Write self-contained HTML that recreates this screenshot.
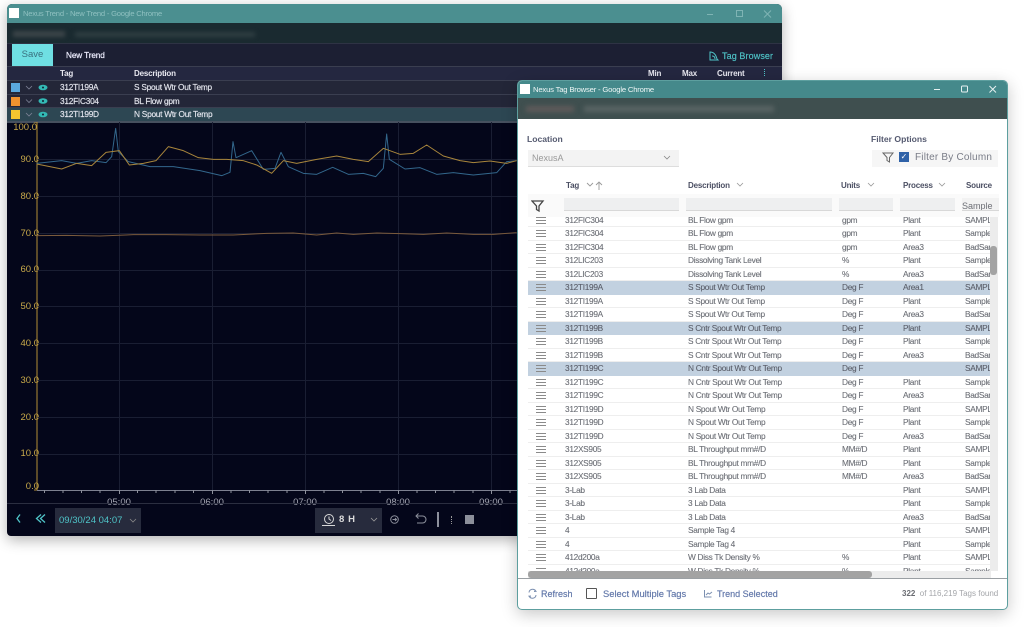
<!DOCTYPE html>
<html><head><meta charset="utf-8"><style>
*{box-sizing:border-box}
html,body{margin:0;padding:0;background:#fff}
body{width:1024px;height:627px;overflow:hidden;position:relative;font-family:"Liberation Sans",sans-serif}
#all{position:absolute;left:0;top:0;width:1024px;height:627px;filter:blur(.3px)}
.a{position:absolute;white-space:nowrap}
#w1{position:absolute;left:7px;top:4px;width:775px;height:532px;background:#04061a;border-radius:5px 5px 4px 4px;box-shadow:0 4px 14px rgba(0,0,0,.3);overflow:hidden}
#w2{position:absolute;left:517px;top:80px;width:491px;height:530px;background:#fff;border:1.5px solid #5d9f9f;border-radius:5px;box-shadow:0 4px 16px rgba(0,0,0,.22);overflow:hidden}
.t1{font-size:8.3px;letter-spacing:-.25px;color:#e4e6ee;font-weight:400;line-height:13px;-webkit-text-stroke:.15px #e4e6ee}
.h1{font-size:8px;letter-spacing:-.2px;color:#e8e8f0;font-weight:700;line-height:13px}
.yl{position:absolute;right:743px;font-size:9.5px;color:#c8a94a;line-height:10px;text-align:right;width:30px}
.xl{position:absolute;top:494px;font-size:9.5px;color:#a4a6b2;line-height:10px;width:40px;text-align:center}
#rows{position:absolute;left:10px;top:136px;width:463px;height:354px;overflow:hidden}
.r{position:absolute;left:0;width:463px;height:13.5px;border-bottom:1px solid #eeeeee;font-size:8.3px;letter-spacing:-.3px;color:#6b6e75;line-height:12.5px;-webkit-text-stroke:.1px #6b6e75}
.r.s{background:#c2d1e0;color:#565a66;border-bottom:0}
.r span{position:absolute;top:0;white-space:nowrap}
.r i{position:absolute;left:8px;top:3px;width:10px;height:7px;border-top:1px solid #8a8a8a;border-bottom:1px solid #8a8a8a}
.r i:after{content:"";position:absolute;left:0;right:0;top:2px;height:1px;background:#8a8a8a}
.c1{left:37px}.c2{left:160px}.c3{left:314px}.c4{left:375px}.c5{left:437px;width:26px;overflow:hidden}
.hd{position:absolute;top:99px;font-size:8px;letter-spacing:-.2px;font-weight:700;color:#4b4f63;line-height:12px;white-space:nowrap}
.fb{position:absolute;top:129px;height:13px;background:#eeeff0;border-bottom:1px solid #d8d8d8}
</style></head><body>
<div id="all">
<div id="w1">
  <div class="a" style="left:0;top:0;width:775px;height:19px;background:#4b8f90"></div>
  <div class="a" style="left:2px;top:4px;width:10px;height:10px;background:#fff"></div>
  <div class="a" style="left:16px;top:4px;font-size:7.6px;letter-spacing:-.2px;line-height:11px;color:#8fc0c0">Nexus Trend - New Trend - Google Chrome</div>
  <svg class="a" style="left:700px;top:4px" width="80" height="12" fill="none" stroke="#7fb4b4" stroke-width="1"><path d="M0 6.500h6"/><rect x="29.500" y="2.500" width="6" height="6"/><path d="M57 2.500l7 7m0-7l-7 7"/></svg>

  <div class="a" style="left:0;top:19px;width:775px;height:21px;background:#1a2a30"></div>
  <div class="a" style="left:6px;top:27px;width:52px;height:6px;background:#3d4549;filter:blur(2px)"></div>
  <div class="a" style="left:68px;top:28px;width:180px;height:5px;background:#2f3e42;filter:blur(2px)"></div>

  <div class="a" style="left:0;top:39px;width:775px;height:27px;background:#1c1f33;border-top:1px solid #2e3344"></div>
  <div class="a" style="left:5px;top:40px;width:41px;height:22px;background:#6fdfe3;color:#39707e;font-size:9.500px;line-height:22px;text-align:center">Save</div>
  <div class="a" style="left:59px;top:46px;font-size:8.200px;letter-spacing:-.1px;line-height:11px;color:#eef;font-weight:400;-webkit-text-stroke:.2px #eef">New Trend</div>
  <svg class="a" style="left:701px;top:46px" width="12" height="12" fill="none" stroke="#4fc4c8" stroke-width="1"><path d="M2 2c4 0 6 3 7 7l1 1H2zM4 6c2 0 3 1 3 3"/></svg>
  <div class="a" style="left:715px;top:46px;font-size:9px;line-height:12px;color:#4fc4c8;letter-spacing:.1px;-webkit-text-stroke:.15px #4fc4c8">Tag Browser</div>

  <div class="a" style="left:0;top:62px;width:775px;height:14px;background:#242740;border-top:1px solid #3a3e50"></div>
  <div class="a h1" style="left:53px;top:63px">Tag</div>
  <div class="a h1" style="left:127px;top:63px">Description</div>
  <div class="a h1" style="left:641px;top:63px">Min</div>
  <div class="a h1" style="left:675px;top:63px">Max</div>
  <div class="a h1" style="left:710px;top:63px">Current</div>
  <div class="a" style="left:757px;top:65px;width:1.500px;height:7px;border-left:1.500px dotted #4fc4c8"></div>

  <div class="a" style="left:0;top:76px;width:775px;height:14px;background:#232638;border-top:1px solid #3a3e50"></div>
  <div class="a" style="left:0;top:90px;width:775px;height:13px;background:#232638;border-top:1px solid #3a3e50"></div>
  <div class="a" style="left:0;top:103px;width:775px;height:14px;background:#2d4753;border-top:1px solid #3a3e50"></div>
  <div class="a" style="left:0;top:117px;width:775px;height:2px;background:#46505f"></div>

  <div class="a" style="left:4px;top:79px;width:9px;height:9px;background:#5aa9de"></div>
  <div class="a" style="left:4px;top:92.500px;width:9px;height:9px;background:#f0922e"></div>
  <div class="a" style="left:4px;top:106px;width:9px;height:9px;background:#f6c62f"></div>
  <svg class="a" style="left:18px;top:78px" width="30" height="40" fill="none">
    <g stroke="#7d8296" stroke-width=".8"><path d="M1 4l3 3 3-3M1 17.500l3 3 3-3M1 31l3 3 3-3"/></g>
    <g fill="#33b9b5"><ellipse cx="18" cy="5.500" rx="4.500" ry="2.800"/><ellipse cx="18" cy="19" rx="4.500" ry="2.800"/><ellipse cx="18" cy="32.500" rx="4.500" ry="2.800"/></g>
    <g fill="#123"><circle cx="18" cy="5.500" r="1"/><circle cx="18" cy="19" r="1"/><circle cx="18" cy="32.500" r="1"/></g>
  </svg>
  <div class="a t1" style="left:53px;top:77px">312TI199A</div><div class="a t1" style="left:127px;top:77px">S Spout Wtr Out Temp</div>
  <div class="a t1" style="left:53px;top:90.500px">312FIC304</div><div class="a t1" style="left:127px;top:90.500px">BL Flow gpm</div>
  <div class="a t1" style="left:53px;top:104px">312TI199D</div><div class="a t1" style="left:127px;top:104px">N Spout Wtr Out Temp</div>

  <div class="yl" style="top:119px;right:745px">100.0</div>
  <div class="yl" style="top:151px">90.0</div>
  <div class="yl" style="top:188px">80.0</div>
  <div class="yl" style="top:225px">70.0</div>
  <div class="yl" style="top:261px">60.0</div>
  <div class="yl" style="top:298px">50.0</div>
  <div class="yl" style="top:335px">40.0</div>
  <div class="yl" style="top:372px">30.0</div>
  <div class="yl" style="top:409px">20.0</div>
  <div class="yl" style="top:445px">10.0</div>
  <div class="yl" style="top:478px">0.0</div>
  <div class="xl" style="left:92px">05:00</div>
  <div class="xl" style="left:185px">06:00</div>
  <div class="xl" style="left:278px">07:00</div>
  <div class="xl" style="left:371px">08:00</div>
  <div class="xl" style="left:464px">09:00</div>
  <div class="a" style="left:0;top:499px;width:775px;height:1px;background:#2b2e40"></div>

  <svg class="a" style="left:8px;top:507px" width="32" height="18" fill="none" stroke="#4fc4c8" stroke-width="1.300"><path d="M5 3.500L2 7.500l3 4M26 3.500l-4.500 4 4.500 4M30 3.500l-4.500 4 4.500 4"/></svg>
  <div class="a" style="left:48px;top:504px;width:86px;height:25px;background:#272b3d;color:#4fc4c8;font-size:9.500px;line-height:25px;padding-left:4px">09/30/24 04:07</div>
  <svg class="a" style="left:122px;top:514px" width="8" height="6" fill="none" stroke="#888" stroke-width=".8"><path d="M1 1l3 3 3-3"/></svg>
  <div class="a" style="left:308px;top:504px;width:67px;height:25px;background:#272b3d"></div>
  <svg class="a" style="left:315px;top:508px" width="14" height="16" fill="none" stroke="#d8d8d8" stroke-width="1"><circle cx="7" cy="7" r="4.500"/><path d="M7 4.500V7l2 1.500M0 13.500h13"/></svg>
  <div class="a" style="left:332px;top:510px;font-size:9.500px;font-weight:700;color:#dcdcdc;line-height:12px;letter-spacing:.6px">8 H</div>
  <svg class="a" style="left:363px;top:513px" width="8" height="6" fill="none" stroke="#999" stroke-width=".8"><path d="M1 1l3 3 3-3"/></svg>
  <svg class="a" style="left:382px;top:509px" width="60" height="16" fill="none" stroke="#8d909c" stroke-width="1"><circle cx="5.500" cy="6.500" r="3.800"/><path d="M3.500 6.500h4M6 5l1.500 1.500L6 8"/><path d="M27 3h6.500a3.500 3.500 0 0 1 0 7H28M29.500 0.500L27 3l2.500 2.500"/></svg>
  <div class="a" style="left:430px;top:508px;width:1.500px;height:15px;background:#8d909c"></div>
  <div class="a" style="left:444px;top:512px;width:1.500px;height:8px;border-left:1.500px dotted #999"></div>
  <div class="a" style="left:458px;top:511px;width:9px;height:9px;background:#8c8f9a"></div>
</div>

<svg class="a" style="left:7px;top:122px;pointer-events:none" width="510" height="381" viewBox="7 122 510 381" fill="none">
  <g stroke="#1a1e33" stroke-width="1">
    <path d="M37 159.500h480M37 196.500h480M37 233.500h480M37 270.500h480M37 306.500h480M37 343.500h480M37 380.500h480M37 417.500h480M37 454.500h480"/>
    <path d="M119.500 122v368M212.500 122v368M305.500 122v368M398.500 122v368M491.500 122v368"/>
  </g>
  <path d="M34 122h3v368h-3" stroke="#b58f35" stroke-width="1"/>
  <path d="M37 490.500h480" stroke="#7d8090" stroke-width="1"/>
  <path d="M44.500 490v3M63 490v3M81.500 490v3M100 490v3M119.500 490v4M137.500 490v3M156 490v3M175 490v3M193.500 490v3M212.500 490v4M231 490v3M249.500 490v3M268 490v3M287 490v3M305.500 490v4M324 490v3M342.500 490v3M361 490v3M380 490v3M398.500 490v4M417 490v3M435.500 490v3M454 490v3M473 490v3M491.500 490v4M510 490v3" stroke="#8d909c" stroke-width="1"/>
  <g transform="translate(0 120) scale(.33333)" stroke-width="3" stroke-linejoin="round">
    <path stroke="#7a5a3c" d="M110 347L200 346 300 348 400 344 500 344 600 345 700 345 800 340 880 339 950 345 1010 339 1060 343 1130 339 1200 341 1270 343 1340 339 1420 343 1480 343 1550 338"/>
    <path stroke="#33678c" d="M110 130L185 122 230 130 275 122 318 128 335 110 347 25 355 95 385 125 450 140 520 140 600 152 665 167 690 157 699 65 708 113 755 92 790 148 825 145 843 97 865 140 910 160 950 163 998 142 1045 163 1090 160 1127 170 1150 145 1160 42 1168 118 1215 147 1260 143 1310 163 1360 158 1420 165 1490 158 1520 125 1550 122"/>
    <path stroke="#a9863c" d="M110 132L185 147 230 130 275 137 318 97 358 92 388 135 430 130 468 122 505 80 550 92 595 113 640 118 680 118 730 122 770 135 815 160 850 122 890 130 950 118 1010 108 1060 118 1105 125 1150 85 1200 103 1240 100 1280 75 1330 108 1380 122 1420 128 1470 123 1520 130 1550 122"/>
  </g>
</svg>

<div id="w2">
  <div class="a" style="left:0;top:0;width:491px;height:17px;background:#45898b"></div>
  <div class="a" style="left:2px;top:3px;width:10px;height:10px;background:#fff"></div>
  <div class="a" style="left:15px;top:3px;font-size:7.700px;letter-spacing:-.2px;line-height:11px;color:#eef6f6">Nexus Tag Browser - Google Chrome</div>
  <svg class="a" style="left:416px;top:2px" width="70" height="12" fill="none" stroke="#e6f0f0" stroke-width="1"><path d="M0 6.500h6"/><rect x="27.500" y="3" width="6" height="6" rx="1"/><path d="M55.500 3l6.500 6.500m0-6.500l-6.500 6.500"/></svg>
  <div class="a" style="left:0;top:17px;width:491px;height:21px;background:#3f4f4f"></div>
  <div class="a" style="left:8px;top:25px;width:48px;height:6px;background:#5f5a5a;filter:blur(2.500px)"></div>
  <div class="a" style="left:66px;top:25px;width:190px;height:6px;background:#596464;filter:blur(2.500px)"></div>

  <div class="a" style="left:9px;top:52px;font-size:8.600px;font-weight:700;color:#555a70;line-height:12px">Location</div>
  <div class="a" style="left:10px;top:69px;width:151px;height:17px;background:#f3f3f3;border-bottom:1px solid #ddd;font-size:9px;line-height:16px;color:#9a9a9a;padding-left:4px">NexusA</div>
  <svg class="a" style="left:145px;top:74px" width="8" height="6" fill="none" stroke="#888" stroke-width=".8"><path d="M1 1l3 3 3-3"/></svg>
  <div class="a" style="left:353px;top:52px;font-size:8.600px;font-weight:700;color:#555a70;line-height:12px">Filter Options</div>
  <div class="a" style="left:354px;top:69px;width:126px;height:17px;background:#f6f6f6"></div>
  <svg class="a" style="left:364px;top:70px" width="13" height="13" fill="none" stroke="#666" stroke-width="1"><path d="M1 2h10L7.500 6.500V11L5 9.500V6.500z"/></svg>
  <div class="a" style="left:381px;top:71px;width:10px;height:10px;background:#2f62a8;color:#fff;font-size:8px;line-height:10px;text-align:center">&#10003;</div>
  <div class="a" style="left:397px;top:71px;font-size:10px;line-height:12px;color:#7a7d88;letter-spacing:.2px">Filter By Column</div>

  <div class="hd" style="left:48px">Tag</div>
  <svg class="a" style="left:68px;top:99px" width="20" height="11" fill="none" stroke="#999" stroke-width=".9"><path d="M1 3l3 3 3-3M13 10V2M10 5l3-3 3 3"/></svg>
  <div class="hd" style="left:170px">Description</div>
  <svg class="a" style="left:218px;top:101px" width="8" height="6" fill="none" stroke="#999" stroke-width=".8"><path d="M1 1l3 3 3-3"/></svg>
  <div class="hd" style="left:323px">Units</div>
  <svg class="a" style="left:349px;top:101px" width="8" height="6" fill="none" stroke="#999" stroke-width=".8"><path d="M1 1l3 3 3-3"/></svg>
  <div class="hd" style="left:385px">Process</div>
  <svg class="a" style="left:420px;top:101px" width="8" height="6" fill="none" stroke="#999" stroke-width=".8"><path d="M1 1l3 3 3-3"/></svg>
  <div class="hd" style="left:448px">Source</div>

  <div class="a" style="left:10px;top:113px;width:471px;height:23px;background:#fafafa"></div>
  <svg class="a" style="left:13px;top:118px" width="14" height="14" fill="none" stroke="#444" stroke-width="1.300"><path d="M1 2h11L8 7v5L5.500 10.500V7z"/></svg>
  <div class="fb" style="left:46px;top:117px;width:115px"></div>
  <div class="fb" style="left:168px;top:117px;width:146px"></div>
  <div class="fb" style="left:321px;top:117px;width:54px"></div>
  <div class="fb" style="left:382px;top:117px;width:55px"></div>
  <div class="fb" style="left:444px;top:117px;width:37px;background:#f2f2f2;font-size:9px;line-height:16px;color:#6d6f76;padding-left:0;overflow:hidden">Sample</div>

  <div id="rows">
    <div class="r" style="top:-3.500px"><i></i><span class="c1">312FIC304</span><span class="c2">BL Flow gpm</span><span class="c3">gpm</span><span class="c4">Plant</span><span class="c5">SAMPL</span></div>
    <div class="r" style="top:10px"><i></i><span class="c1">312FIC304</span><span class="c2">BL Flow gpm</span><span class="c3">gpm</span><span class="c4">Plant</span><span class="c5">Sample</span></div>
    <div class="r" style="top:23.500px"><i></i><span class="c1">312FIC304</span><span class="c2">BL Flow gpm</span><span class="c3">gpm</span><span class="c4">Area3</span><span class="c5">BadSample</span></div>
    <div class="r" style="top:37px"><i></i><span class="c1">312LIC203</span><span class="c2">Dissolving Tank Level</span><span class="c3">%</span><span class="c4">Plant</span><span class="c5">Sample</span></div>
    <div class="r" style="top:50.500px"><i></i><span class="c1">312LIC203</span><span class="c2">Dissolving Tank Level</span><span class="c3">%</span><span class="c4">Area3</span><span class="c5">BadSample</span></div>
    <div class="r s" style="top:64px"><i></i><span class="c1">312TI199A</span><span class="c2">S Spout Wtr Out Temp</span><span class="c3">Deg F</span><span class="c4">Area1</span><span class="c5">SAMPL</span></div>
    <div class="r" style="top:77.500px"><i></i><span class="c1">312TI199A</span><span class="c2">S Spout Wtr Out Temp</span><span class="c3">Deg F</span><span class="c4">Plant</span><span class="c5">Sample</span></div>
    <div class="r" style="top:91px"><i></i><span class="c1">312TI199A</span><span class="c2">S Spout Wtr Out Temp</span><span class="c3">Deg F</span><span class="c4">Area3</span><span class="c5">BadSample</span></div>
    <div class="r s" style="top:104.500px"><i></i><span class="c1">312TI199B</span><span class="c2">S Cntr Spout Wtr Out Temp</span><span class="c3">Deg F</span><span class="c4">Plant</span><span class="c5">SAMPL</span></div>
    <div class="r" style="top:118px"><i></i><span class="c1">312TI199B</span><span class="c2">S Cntr Spout Wtr Out Temp</span><span class="c3">Deg F</span><span class="c4">Plant</span><span class="c5">Sample</span></div>
    <div class="r" style="top:131.500px"><i></i><span class="c1">312TI199B</span><span class="c2">S Cntr Spout Wtr Out Temp</span><span class="c3">Deg F</span><span class="c4">Area3</span><span class="c5">BadSample</span></div>
    <div class="r s" style="top:145px"><i></i><span class="c1">312TI199C</span><span class="c2">N Cntr Spout Wtr Out Temp</span><span class="c3">Deg F</span><span class="c5">SAMPL</span></div>
    <div class="r" style="top:158.500px"><i></i><span class="c1">312TI199C</span><span class="c2">N Cntr Spout Wtr Out Temp</span><span class="c3">Deg F</span><span class="c4">Plant</span><span class="c5">Sample</span></div>
    <div class="r" style="top:172px"><i></i><span class="c1">312TI199C</span><span class="c2">N Cntr Spout Wtr Out Temp</span><span class="c3">Deg F</span><span class="c4">Area3</span><span class="c5">BadSample</span></div>
    <div class="r" style="top:185.500px"><i></i><span class="c1">312TI199D</span><span class="c2">N Spout Wtr Out Temp</span><span class="c3">Deg F</span><span class="c4">Plant</span><span class="c5">SAMPL</span></div>
    <div class="r" style="top:199px"><i></i><span class="c1">312TI199D</span><span class="c2">N Spout Wtr Out Temp</span><span class="c3">Deg F</span><span class="c4">Plant</span><span class="c5">Sample</span></div>
    <div class="r" style="top:212.500px"><i></i><span class="c1">312TI199D</span><span class="c2">N Spout Wtr Out Temp</span><span class="c3">Deg F</span><span class="c4">Area3</span><span class="c5">BadSample</span></div>
    <div class="r" style="top:226px"><i></i><span class="c1">312XS905</span><span class="c2">BL Throughput mm#/D</span><span class="c3">MM#/D</span><span class="c4">Plant</span><span class="c5">SAMPL</span></div>
    <div class="r" style="top:239.500px"><i></i><span class="c1">312XS905</span><span class="c2">BL Throughput mm#/D</span><span class="c3">MM#/D</span><span class="c4">Plant</span><span class="c5">Sample</span></div>
    <div class="r" style="top:253px"><i></i><span class="c1">312XS905</span><span class="c2">BL Throughput mm#/D</span><span class="c3">MM#/D</span><span class="c4">Area3</span><span class="c5">BadSample</span></div>
    <div class="r" style="top:266.500px"><i></i><span class="c1">3-Lab</span><span class="c2">3 Lab Data</span><span class="c4">Plant</span><span class="c5">SAMPL</span></div>
    <div class="r" style="top:280px"><i></i><span class="c1">3-Lab</span><span class="c2">3 Lab Data</span><span class="c4">Plant</span><span class="c5">Sample</span></div>
    <div class="r" style="top:293.500px"><i></i><span class="c1">3-Lab</span><span class="c2">3 Lab Data</span><span class="c4">Area3</span><span class="c5">BadSample</span></div>
    <div class="r" style="top:307px"><i></i><span class="c1">4</span><span class="c2">Sample Tag 4</span><span class="c4">Plant</span><span class="c5">SAMPL</span></div>
    <div class="r" style="top:320.500px"><i></i><span class="c1">4</span><span class="c2">Sample Tag 4</span><span class="c4">Plant</span><span class="c5">Sample</span></div>
    <div class="r" style="top:334px"><i></i><span class="c1">412d200a</span><span class="c2">W Diss Tk Density %</span><span class="c3">%</span><span class="c4">Plant</span><span class="c5">SAMPL</span></div>
    <div class="r" style="top:347.500px"><i></i><span class="c1">412d200a</span><span class="c2">W Diss Tk Density %</span><span class="c3">%</span><span class="c4">Plant</span><span class="c5">Sample</span></div>
  </div>

  <div class="a" style="left:472px;top:136px;width:8px;height:354px;background:#ececec"></div>
  <div class="a" style="left:472px;top:165px;width:7px;height:29px;background:#a3a3a3;border-radius:3px"></div>
  <div class="a" style="left:10px;top:490px;width:463px;height:7px;background:#ececec"></div>
  <div class="a" style="left:10px;top:490px;width:344px;height:7px;background:#a3a3a3;border-radius:3px"></div>

  <div class="a" style="left:0;top:497px;width:491px;height:1px;background:#9a9fa3"></div>
  <svg class="a" style="left:9px;top:507px" width="12" height="12" fill="none" stroke="#7b8fb0" stroke-width="1"><path d="M2 4.500A3.500 3.500 0 0 1 8.500 3M9 7A3.500 3.500 0 0 1 2.500 8.500M7.500 1.500L9 3.300l-2 .2M3.500 10L2 8.200l2-.2"/></svg>
  <div class="a" style="left:23px;top:507px;font-size:9px;line-height:12px;color:#5f75a8;-webkit-text-stroke:.15px #5f75a8">Refresh</div>
  <div class="a" style="left:68px;top:507px;width:11px;height:11px;border:1.300px solid #555;border-radius:1px"></div>
  <div class="a" style="left:85px;top:507px;font-size:9.400px;line-height:12px;color:#5f75a8;-webkit-text-stroke:.15px #5f75a8">Select Multiple Tags</div>
  <svg class="a" style="left:185px;top:507px" width="11" height="11" fill="none" stroke="#7b8fb0" stroke-width="1"><path d="M1.500 2v7h7M3 7l2-2 1.500 1 2.500-2"/></svg>
  <div class="a" style="left:199px;top:507px;font-size:9px;line-height:12px;color:#5f75a8;-webkit-text-stroke:.15px #5f75a8">Trend Selected</div>
  <div class="a" style="left:384px;top:507px;font-size:8px;line-height:11px;color:#a4a6aa"><b style="color:#6a6c72">322</b>&nbsp; of 116,219 Tags found</div>
</div>
</div>
</body></html>
